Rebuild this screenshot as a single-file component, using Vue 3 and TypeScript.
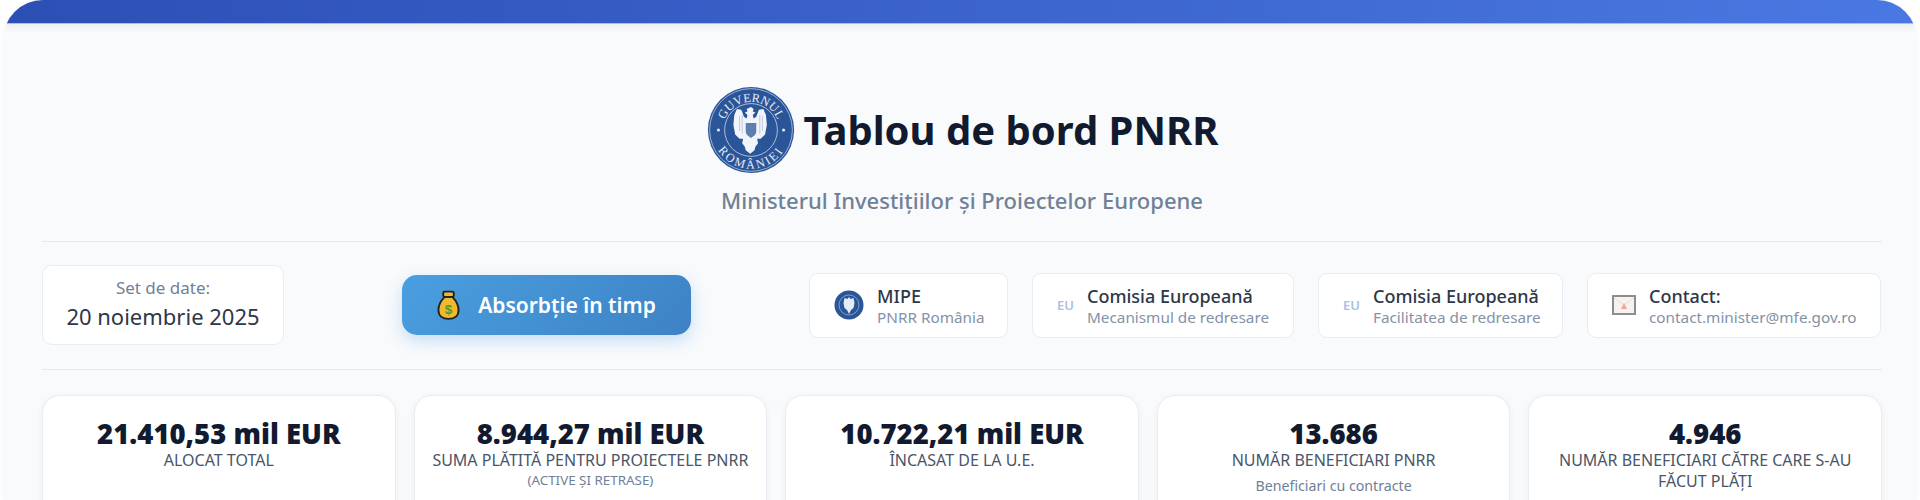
<template>
  <div class="page">
    <div class="accent-bar"></div>
    <main class="content">
      <header class="masthead">
        <div class="title-row">
          <svg class="seal" viewBox="0 0 100 100">
            <defs>
              <path id="arc-top" d="M18 50a32 32 0 0 1 64 0" />
              <path id="arc-bottom" d="M6 50a44 44 0 0 0 88 0" />
            </defs>
            <circle cx="50" cy="50" r="49" fill="#2a5598" />
            <circle cx="50" cy="50" r="47" fill="none" stroke="#c9d6e8" stroke-width="0.8" />
            <circle cx="50" cy="50" r="30" fill="none" stroke="#dfe7f2" stroke-width="0.8" />
            <text class="seal-text"><textPath href="#arc-top" startOffset="50%" text-anchor="middle">GUVERNUL</textPath></text>
            <text class="seal-text wide"><textPath href="#arc-bottom" startOffset="50%" text-anchor="middle">ROMÂNIEI</textPath></text>
            <circle cx="13" cy="50" r="1.800" fill="#dfe7f2" />
            <circle cx="87" cy="50" r="1.800" fill="#dfe7f2" />
            <path fill="#f1f4f9" d="M50 24l3 2-1 3 3 1-3 3 1 4 3-2 3-8 5-1 3 7 1 11-2 11-5 5-4 0 1 5-3 4-1 4-5 4-5-4-1-4-3-4 1-5-4 0-5-5-2-11 1-11 3-7 5 1 3 8 3 2 1-4-3-3 3-1-1-3z" />
            <path fill="#5c7fb0" d="M44 42h12v10c0 3-3 5-6 7-3-2-6-4-6-7z" />
            <path fill="none" stroke="#a9bbd6" stroke-width="0.8" d="M37 34v17M40 33v21M63 34v17M60 33v21" />
          </svg>
          <h1>Tablou de bord PNRR</h1>
        </div>
        <p class="subtitle">Ministerul Investițiilor și Proiectelor Europene</p>
      </header>

      <section class="toolbar">
        <div class="dataset">
          <span class="dataset-label">Set de date:</span>
          <span class="dataset-value">20 noiembrie 2025</span>
        </div>
        <button class="absorb-btn" type="button">
          <svg class="bag" viewBox="0 0 24 31">
            <path fill="#f0b92f" stroke="#222" stroke-width="2" stroke-linejoin="round" d="M8 7C3 12 1.500 17 1.500 21c0 6 4.500 9 10.500 9s10.500-3 10.500-9c0-4-1.500-9-6.500-14z" />
            <rect x="6.500" y="1.500" width="11" height="5.500" rx="1.500" fill="#f0b92f" stroke="#222" stroke-width="2" />
            <text x="12" y="25" class="bag-sign">$</text>
          </svg>
          Absorbție în timp
        </button>
        <div class="links">
          <a v-for="link in links" :key="link.sub" class="link-card" :style="{ width: link.width + 'px' }">
            <svg v-if="link.icon === 'seal'" class="mini-seal" viewBox="0 0 30 30">
              <circle cx="15" cy="15" r="14.500" fill="#2a5598" />
              <circle cx="15" cy="15" r="10" fill="none" stroke="#7f9cc8" stroke-width="1" />
              <path fill="#e6ecf5" d="M15 7l1.500 2 3-1 1 5-1 5-2.500 2-2 4-2-4-2.500-2-1-5 1-5 3 1z" />
            </svg>
            <span v-else-if="link.icon === 'eu'" class="eu-mark">EU</span>
            <svg v-else class="mail" viewBox="0 0 24 20">
              <rect x="1" y="1" width="22" height="18" fill="#f8f1ee" stroke="#8d8d8d" stroke-width="2" />
              <path d="M2 3l10 7 10-7" fill="none" stroke="#e3dfdd" stroke-width="1" />
              <path d="M12 8l3 6H9z" fill="#f0a79b" />
            </svg>
            <span class="link-text">
              <strong>{{ link.title }}</strong>
              <small>{{ link.sub }}</small>
            </span>
          </a>
        </div>
      </section>

      <section class="stats">
        <article v-for="stat in stats" :key="stat.label" class="stat-card">
          <div class="stat-value">{{ stat.value }}</div>
          <div class="stat-label">{{ stat.label }}</div>
          <div v-if="stat.note" class="stat-note">{{ stat.note }}</div>
          <div v-if="stat.info" class="stat-info">{{ stat.info }}</div>
        </article>
      </section>
    </main>
  </div>
</template>

<script setup lang="ts">
const links = [
  { icon: 'seal', title: 'MIPE', sub: 'PNRR România', width: 199 },
  { icon: 'eu', title: 'Comisia Europeană', sub: 'Mecanismul de redresare', width: 262 },
  { icon: 'eu', title: 'Comisia Europeană', sub: 'Facilitatea de redresare', width: 245 },
  { icon: 'mail', title: 'Contact:', sub: 'contact.minister@mfe.gov.ro', width: 294 },
];

const stats: { value: string; label: string; note?: string; info?: string }[] = [
  { value: '21.410,53 mil EUR', label: 'ALOCAT TOTAL' },
  { value: '8.944,27 mil EUR', label: 'SUMA PLĂTITĂ PENTRU PROIECTELE PNRR', note: '(ACTIVE ȘI RETRASE)' },
  { value: '10.722,21 mil EUR', label: 'ÎNCASAT DE LA U.E.' },
  { value: '13.686', label: 'NUMĂR BENEFICIARI PNRR', info: 'Beneficiari cu contracte' },
  { value: '4.946', label: 'NUMĂR BENEFICIARI CĂTRE CARE S-AU FĂCUT PLĂȚI' },
];
</script>

<style>
html,
body {
  margin: 0;
  overflow: hidden;
  background: #fff;
}
</style>

<style scoped>
.page {
  height: 500px;
  overflow: hidden;
  font-family: 'Noto Sans', 'Open Sans', sans-serif;
  background: #f8fafc;
  margin: 0 3px;
  border-radius: 40px 40px 0 0;
  box-shadow: 0 0 6px rgba(0, 0, 0, 0.04);
}

.accent-bar {
  height: 24px;
  background: linear-gradient(90deg, #2c4fb5 0%, #4a78e2 100%);
  border-bottom: 1px solid #a9c0ee;
  box-sizing: border-box;
  box-shadow: 0 3px 8px rgba(0, 0, 0, 0.06);
}

.content {
  padding: 62px 35px 0 39px;
}

.masthead {
  text-align: center;
  border-bottom: 1px solid #e2e8f0;
  padding-bottom: 27px;
}

.title-row {
  display: flex;
  align-items: center;
  justify-content: center;
  gap: 8px;
}

.seal {
  width: 90px;
  height: 88px;
}

.seal-text {
  font-family: 'Liberation Serif', serif;
  font-size: 14px;
  fill: #e6ecf5;
}

.seal-text.wide {
  letter-spacing: 2.500px;
}

h1 {
  margin: 0;
  font-size: 40px;
  font-weight: 700;
  color: #111a2e;
  line-height: 1.2;
}

.subtitle {
  margin: 13px 0 0;
  font-size: 22px;
  font-weight: 500;
  line-height: 27px;
  color: #718096;
}

.toolbar {
  display: flex;
  align-items: center;
  justify-content: space-between;
  padding: 23px 0 24px;
  border-bottom: 1px solid #e2e8f0;
}

.dataset {
  width: 242px;
  height: 80px;
  box-sizing: border-box;
  padding-bottom: 2px;
  display: flex;
  flex-direction: column;
  align-items: center;
  justify-content: center;
  gap: 2px;
  background: #fff;
  border: 1px solid #e8edf3;
  border-radius: 10px;
}

.dataset-label {
  font-size: 17px;
  line-height: 23px;
  color: #718096;
}

.dataset-value {
  font-size: 22px;
  line-height: 31px;
  color: #2d3748;
}

.absorb-btn {
  width: 289px;
  height: 60px;
  margin-left: 118px;
  display: flex;
  align-items: center;
  justify-content: center;
  gap: 18px;
  border: 0;
  border-radius: 15px;
  color: #fff;
  font-family: inherit;
  font-size: 21px;
  font-weight: 600;
  background: linear-gradient(135deg, #4a9fe0 0%, #3d82c4 100%);
  box-shadow: 0 6px 16px rgba(66, 153, 225, 0.28);
}

.bag {
  width: 23px;
  height: 30px;
}

.bag-sign {
  font-family: 'Liberation Sans', sans-serif;
  font-size: 14px;
  font-weight: 700;
  fill: #4f9a2f;
  text-anchor: middle;
}

.links {
  display: flex;
  gap: 24px;
  margin-left: auto;
  margin-right: 1px;
}

.link-card {
  box-sizing: border-box;
  height: 65px;
  display: flex;
  align-items: center;
  gap: 13px;
  padding: 0 24px;
  background: #fff;
  border: 1px solid #e8edf3;
  border-radius: 9px;
}

.mini-seal {
  width: 30px;
  height: 30px;
  flex-shrink: 0;
}

.eu-mark {
  font-size: 13px;
  font-weight: 600;
  color: #a9bfe8;
}

.mail {
  width: 24px;
  height: 20px;
  flex-shrink: 0;
}

.link-text {
  display: flex;
  flex-direction: column;
  white-space: nowrap;
}

.link-text strong {
  font-size: 18px;
  line-height: 23px;
  font-weight: 500;
  color: #2d3748;
}

.link-text small {
  font-size: 15.300px;
  line-height: 18px;
  color: #8492a6;
}

.stats {
  display: grid;
  grid-template-columns: repeat(5, 1fr);
  gap: 18px;
  margin-top: 25px;
}

.stat-card {
  min-height: 160px;
  padding: 22px 10px;
  text-align: center;
  background: #fff;
  border: 1px solid #e8edf3;
  border-radius: 18px;
  box-shadow: 0 2px 8px rgba(0, 0, 0, 0.05);
}

.stat-value {
  font-size: 27.500px;
  font-weight: 900;
  line-height: 32px;
  color: #111a2e;
}

.stat-label {
  font-size: 16px;
  line-height: 21px;
  color: #4a5568;
}

.stat-note {
  font-size: 13.400px;
  line-height: 18px;
  color: #718096;
}

.stat-info {
  margin-top: 5px;
  font-size: 14.200px;
  line-height: 20px;
  color: #718096;
}
</style>
